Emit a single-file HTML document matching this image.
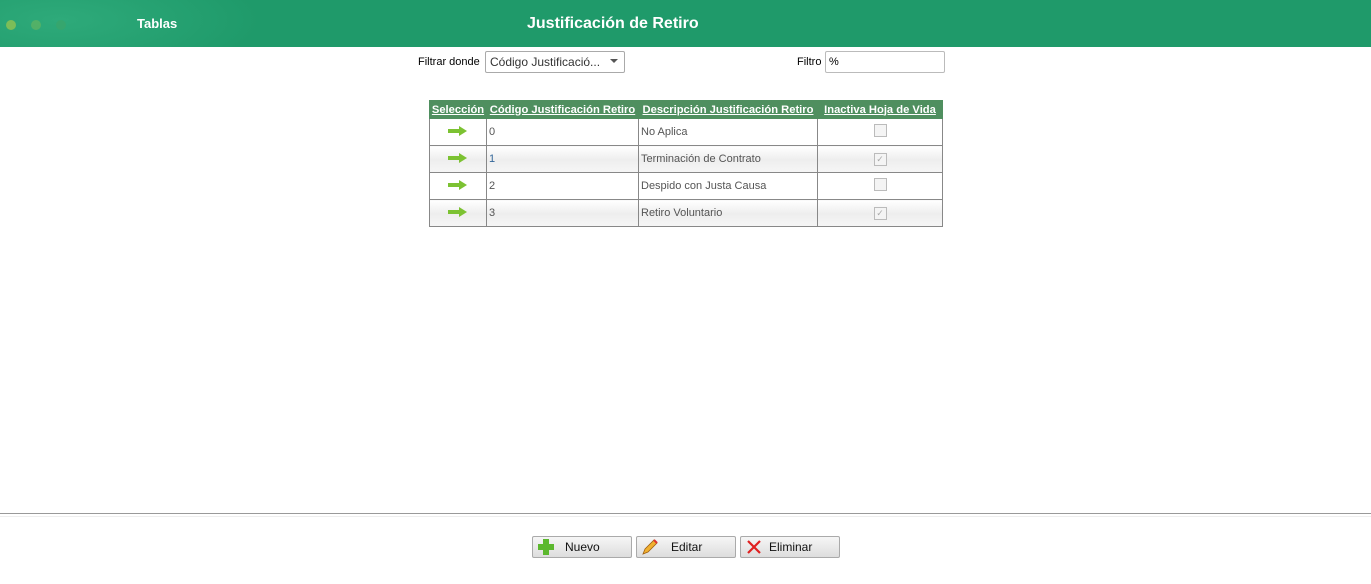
<!DOCTYPE html>
<html><head><meta charset="utf-8"><style>
body{margin:0;width:1371px;height:584px;background:#fff;font-family:"Liberation Sans",sans-serif;position:relative;overflow:hidden}
.hdr{position:absolute;left:0;top:0;width:1371px;height:47px;background:radial-gradient(ellipse 200px 60px at 60px 20px,#2eaa7a,#1f9a6a 100%);background-color:#1f9a6a}
.dot{position:absolute;top:20px;width:10px;height:10px;border-radius:50%}
.t{position:absolute;color:#fff;font-weight:bold}
.lbl{position:absolute;font-size:11px;color:#000}
table{position:absolute;left:429px;top:100px;border-collapse:collapse;font-size:11px;table-layout:fixed;width:513px}
th{background:#4f8f5f;color:#fff;font-weight:bold;text-decoration:underline;height:17px;padding:0;border:1px solid #4f8f5f;white-space:nowrap;font-size:11.2px;overflow:hidden}
td{border:1px solid #888;height:26px;padding:0 2px;color:#555;white-space:nowrap}
tr.alt td{background:linear-gradient(#fff,#eee 50%,#f6f6f6)}
.cb{display:inline-block;width:11px;height:11px;border:1px solid #bbb;background:#f4f4f4;font-size:9px;line-height:11px;color:#aaa;text-align:center}
.btn{position:absolute;top:536px;width:98px;height:20px;border:1px solid #aaa;border-radius:2px;background:linear-gradient(#f6f6f6,#ddd);font-size:12px;color:#111}
.btn span{position:absolute;top:3px}
</style></head><body>
<div class="hdr">
<div class="dot" style="left:6px;background:#7cbd58"></div>
<div class="dot" style="left:31px;background:#5cb363;opacity:.8"></div>
<div class="dot" style="left:56px;background:#3aa56a;opacity:.7"></div>
<div class="t" style="left:137px;top:16px;font-size:13px">Tablas</div>
<div class="t" style="left:527px;top:15px;font-size:16px">Justificación de Retiro</div>
</div>
<div class="lbl" style="left:418px;top:56px">Filtrar donde</div>
<div style="position:absolute;left:485px;top:51px;width:138px;height:20px;border:1px solid #aaa;border-radius:2px;font-size:12px;color:#333"><span style="position:absolute;left:4px;top:3px">Código Justificació...</span><span style="position:absolute;right:6px;top:7px;border:4px solid transparent;border-top:4px solid #555"></span></div>
<div class="lbl" style="left:797px;top:56px">Filtro</div>
<div style="position:absolute;left:825px;top:51px;width:118px;height:20px;border:1px solid #bbb;border-radius:2px;font-size:11px"><span style="position:absolute;left:3px;top:4px">%</span></div>
<table>
<colgroup><col style="width:57px"><col style="width:152px"><col style="width:179px"><col style="width:125px"></colgroup>
<tr><th>Selección</th><th>Código Justificación Retiro</th><th>Descripción Justificación Retiro</th><th>Inactiva Hoja de Vida</th></tr>
<tr><td align="center"><svg width="20" height="10"><path d="M0 3h11V0l8 5-8 5V7H0z" fill="#7cc232"/></svg></td><td>0</td><td>No Aplica</td><td align="center"><span class="cb"></span></td></tr>
<tr class="alt"><td align="center"><svg width="20" height="10"><path d="M0 3h11V0l8 5-8 5V7H0z" fill="#7cc232"/></svg></td><td style="color:#369">1</td><td>Terminación de Contrato</td><td align="center"><span class="cb">✓</span></td></tr>
<tr><td align="center"><svg width="20" height="10"><path d="M0 3h11V0l8 5-8 5V7H0z" fill="#7cc232"/></svg></td><td>2</td><td>Despido con Justa Causa</td><td align="center"><span class="cb"></span></td></tr>
<tr class="alt"><td align="center"><svg width="20" height="10"><path d="M0 3h11V0l8 5-8 5V7H0z" fill="#7cc232"/></svg></td><td>3</td><td>Retiro Voluntario</td><td align="center"><span class="cb">✓</span></td></tr>
</table>
<div style="position:absolute;left:0;top:513px;width:1371px;height:1px;background:#999"></div>
<div style="position:absolute;left:0;top:516px;width:1371px;height:1px;background:#eee"></div>
<div class="btn" style="left:532px"><svg style="position:absolute;left:5px;top:2px" width="16" height="16"><path d="M5 0h6v5h5v6h-5v5H5v-5H0V5h5z" fill="#5cb82e"/></svg><span style="left:32px">Nuevo</span></div>
<div class="btn" style="left:636px"><svg style="position:absolute;left:4px;top:1px" width="18" height="18"><path d="M2 16l2-5 9-9 3 3-9 9z" fill="#f0b030" stroke="#a06010" stroke-width=".8"/><path d="M13 2l3 3" stroke="#d33" stroke-width="2"/></svg><span style="left:34px">Editar</span></div>
<div class="btn" style="left:740px"><svg style="position:absolute;left:6px;top:3px" width="14" height="14"><path d="M1 1l12 12M13 1L1 13" stroke="#e02020" stroke-width="2.2"/></svg><span style="left:28px">Eliminar</span></div>
</body></html>
